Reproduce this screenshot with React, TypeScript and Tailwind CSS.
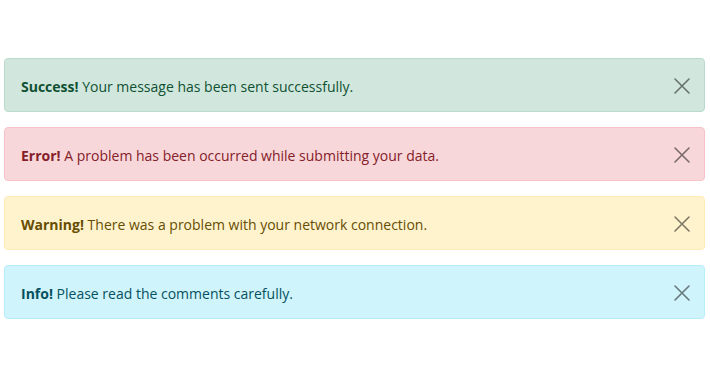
const alerts = [
  {
    title: 'Success!',
    text: 'Your message has been sent successfully.',
    box: 'bg-[#d1e7dd] border-[#badbcc] text-[#0f5132]',
  },
  {
    title: 'Error!',
    text: 'A problem has been occurred while submitting your data.',
    box: 'bg-[#f8d7da] border-[#f5c2c7] text-[#842029]',
  },
  {
    title: 'Warning!',
    text: 'There was a problem with your network connection.',
    box: 'bg-[#fff3cd] border-[#ffecb5] text-[#664d03]',
  },
  {
    title: 'Info!',
    text: 'Please read the comments carefully.',
    box: 'bg-[#cff4fc] border-[#b6effb] text-[#055160]',
  },
];

function CloseIcon() {
  return (
    <svg width="16" height="16" viewBox="0 0 16 16" fill="none">
      <path d="M1 1L15 15M15 1L1 15" stroke="#000" strokeWidth="1.6" strokeLinecap="round" />
    </svg>
  );
}

export default function App() {
  return (
    <div className="w-[710px] h-[380px] bg-white pt-[58px] pl-[4px] font-['Open_Sans',sans-serif]">
      <div className="w-[701px] flex flex-col gap-[15px]">
        {alerts.map((a) => (
          <div
            key={a.title}
            className={`flex items-center justify-between h-[54px] border rounded-[4px] pl-[16px] pr-[14px] ${a.box}`}
          >
            <p className="text-[14px] leading-[21px] pt-[2px]">
              <strong className="font-bold">{a.title}</strong> {a.text}
            </p>
            <button className="opacity-50 p-0 pt-[1px]">
              <CloseIcon />
            </button>
          </div>
        ))}
      </div>
    </div>
  );
}
